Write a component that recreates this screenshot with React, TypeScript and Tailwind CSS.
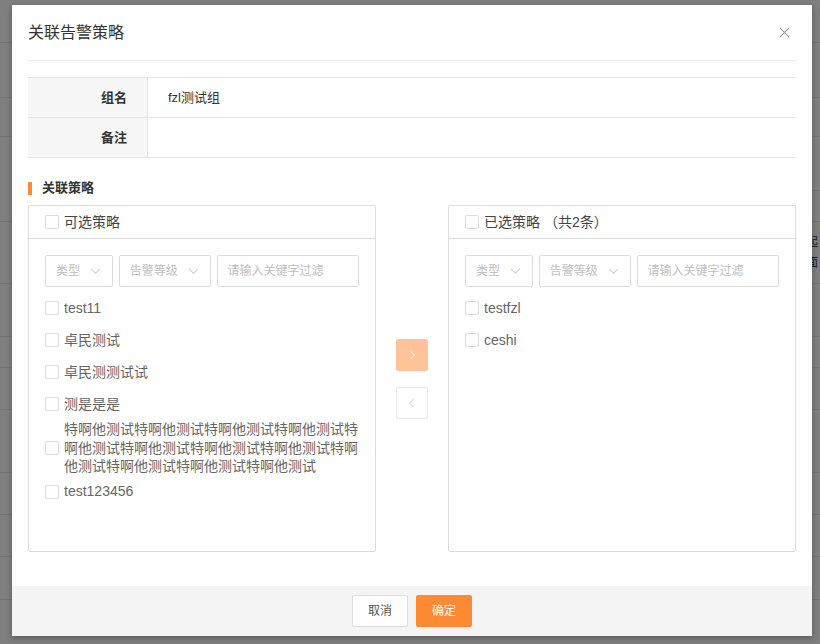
import React from 'react';

const font = { fontFamily: '"Liberation Sans", "Noto Sans CJK SC", sans-serif' };

// heights of the rows of the page behind the dialog
const bgRows = [43, 55, 39, 54, 31, 62, 53, 31, 42, 63, 42, 42, 43];

const leftItems = [
    'test11',
    '卓民测试',
    '卓民测测试试',
    '测是是是',
    '特啊他测试特啊他测试特啊他测试特啊他测试特啊他测试特啊他测试特啊他测试特啊他测试特啊他测试特啊他测试特啊他测试特啊他测试',
    'test123456',
];

const rightItems = ['testfzl', 'ceshi'];

const Checkbox: React.FC = () => (
    <span className="inline-block w-[14px] h-[14px] shrink-0 border border-[#dcdcdc] rounded-[2px] bg-white" />
);

const Chevron: React.FC<{ dir: 'down' | 'left' | 'right'; className?: string }> = ({ dir, className }) => {
    const d = dir === 'down' ? 'M1 3l5 5 5-5' : dir === 'right' ? 'M4 1l5 5-5 5' : 'M8 1L3 6l5 5';
    return (
        <svg viewBox="0 0 12 12" className={className} fill="none" stroke="currentColor" strokeWidth="1.1">
            <path d={d} />
        </svg>
    );
};

const Filters: React.FC = () => (
    <div className="flex gap-[6px] text-[12px] text-[#c0c0c0]">
        <div className="w-[68px] h-[32px] border border-[#dcdcdc] rounded-[2px] flex items-center justify-between pl-[10px] pr-[11px]">
            <span>类型</span>
            <Chevron dir="down" className="w-[11px] h-[11px] text-[#c8c8c8]" />
        </div>
        <div className="w-[92px] h-[32px] border border-[#dcdcdc] rounded-[2px] flex items-center justify-between pl-[10px] pr-[11px]">
            <span>告警等级</span>
            <Chevron dir="down" className="w-[11px] h-[11px] text-[#c8c8c8]" />
        </div>
        <div className="w-[143px] h-[32px] border border-[#dcdcdc] rounded-[2px] flex items-center pl-[10px]">
            <span>请输入关键字过滤</span>
        </div>
    </div>
);

const Panel: React.FC<{ title: React.ReactNode; items: string[] }> = ({ title, items }) => (
    <div className="w-[348px] h-[347px] border border-[#dcdcdc] rounded-[2px] flex flex-col">
        <div className="h-[33px] border-b border-[#dcdcdc] flex items-center gap-[5px] pl-[16px] text-[14px] text-[#444]">
            <Checkbox />
            <span>{title}</span>
        </div>
        <div className="pt-[16px] pl-[16px] pr-[16px]">
            <Filters />
            <div className="mt-[5px]">
                {items.map((item) => (
                    <div key={item} className="min-h-[32px] flex items-center gap-[5px] text-[14px] text-[#666]">
                        <Checkbox />
                        <span className="leading-[18.5px] break-all">{item}</span>
                    </div>
                ))}
            </div>
        </div>
    </div>
);

const App: React.FC = () => {
    return (
        <div className="relative w-[820px] h-[644px] overflow-hidden bg-white" style={font}>
            {/* page behind the dialog */}
            <div className="flex flex-col">
                {bgRows.map((h, i) => (
                    <div key={i} className={i === 3 ? 'flex justify-end items-end' : 'border-b border-[#ebebeb] flex justify-end'} style={{ height: h }}>
                        {i === 3 && <div className="w-[40px] border-b border-[#ebebeb]" />}
                        {i === 5 && (
                            <div className="pt-[10px] pr-[2px] text-[12px] text-[#333] leading-[21px]">
                                <div>引起</div>
                                <div>里面</div>
                            </div>
                        )}
                    </div>
                ))}
            </div>
            <div className="absolute inset-0 bg-black/50" />

            {/* dialog */}
            <div className="absolute left-[12px] top-[5px] w-[800px] bg-white shadow-[0_2px_6px_rgba(0,0,0,0.3)] flex flex-col">
                <div className="px-[16px]">
                    <div className="h-[56px] border-b border-[#ececec] flex items-center justify-between">
                        <span className="text-[16px] text-[#333]">关联告警策略</span>
                        <svg viewBox="0 0 12 12" className="w-[11px] h-[11px] mr-[6px] text-[#999]" fill="none" stroke="currentColor" strokeWidth="1.1">
                            <path d="M1 1l10 10M11 1L1 11" />
                        </svg>
                    </div>

                    <div className="mt-[16px] border-t border-[#e5e5e5] text-[13px] text-[#333]">
                        <div className="flex h-[40px] border-b border-[#e5e5e5]">
                            <div className="w-[120px] bg-[#f7f7f7] border-r border-[#e5e5e5] flex items-center justify-end pr-[20px] font-bold">组名</div>
                            <div className="flex items-center pl-[20px]">fzl测试组</div>
                        </div>
                        <div className="flex h-[40px] border-b border-[#e5e5e5]">
                            <div className="w-[120px] bg-[#f7f7f7] border-r border-[#e5e5e5] flex items-center justify-end pr-[20px] font-bold">备注</div>
                            <div className="flex items-center pl-[20px]"></div>
                        </div>
                    </div>

                    <div className="mt-[22px] h-[16px] flex items-center gap-[10px]">
                        <span className="w-[4px] h-[13px] bg-[#ff8a34]" />
                        <span className="text-[13px] font-bold text-[#333]">关联策略</span>
                    </div>

                    <div className="mt-[9px] flex">
                        <Panel title="可选策略" items={leftItems} />
                        <div className="w-[72px] flex flex-col items-center justify-center gap-[16px]">
                            <div className="w-[32px] h-[32px] rounded-[2px] bg-[#ffc39a] flex items-center justify-center">
                                <Chevron dir="right" className="w-[10px] h-[10px] text-white" />
                            </div>
                            <div className="w-[32px] h-[32px] rounded-[2px] border border-[#e6e6e6] bg-white flex items-center justify-center">
                                <Chevron dir="left" className="w-[10px] h-[10px] text-[#c8c8c8]" />
                            </div>
                        </div>
                        <Panel title="已选策略 （共2条）" items={rightItems} />
                    </div>
                </div>

                <div className="mt-[34px] h-[50px] bg-[#f4f4f4] flex items-center justify-center gap-[8px] text-[12px]">
                    <button className="w-[56px] h-[32px] bg-white border border-[#dcdcdc] rounded-[2px] text-[#555]">取消</button>
                    <button className="w-[56px] h-[32px] bg-[#ff8a34] rounded-[2px] text-white">确定</button>
                </div>
            </div>
        </div>
    );
};

export default App;
